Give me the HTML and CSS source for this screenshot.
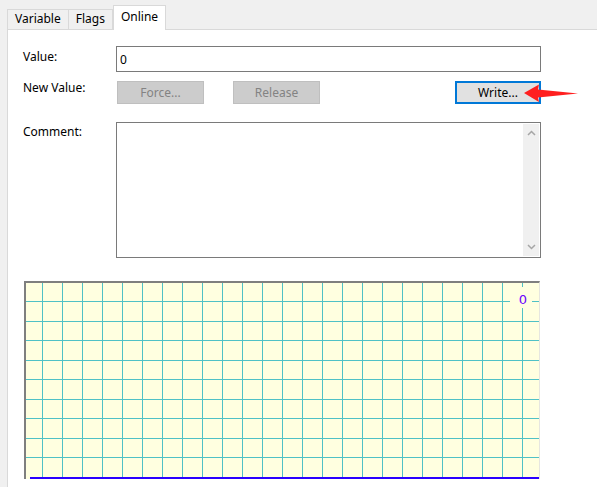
FILE: index.html
```html
<!DOCTYPE html>
<html lang="en">
<head>
  <meta charset="UTF-8">
  <meta name="viewport" content="width=device-width, initial-scale=1.0">
  <title>Variable Properties</title>
  <link rel="stylesheet" href="styles.css">
</head>
<body>
  <div class="tabs">
    <div class="tab">Variable</div>
    <div class="tab">Flags</div>
    <div class="tab active">Online</div>
  </div>

  <div class="panel">
    <div class="row value-row">
      <label class="label" for="value">Value:</label>
      <input class="value-input" id="value" type="text" value="0">
    </div>

    <div class="row buttons-row">
      <span class="label label-new">New Value:</span>
      <button class="btn" disabled>Force...</button>
      <button class="btn btn-release" disabled>Release</button>
      <button class="btn btn-write">Write...</button>
      <svg class="arrow" width="60" height="22" viewBox="0 0 60 22">
        <polygon points="0,9 15,0.5 14,5.5 54,9.5 14,13.5 15,18" fill="#ff1f1f"/>
      </svg>
    </div>

    <div class="row comment-row">
      <span class="label label-comment">Comment:</span>
      <div class="comment">
        <div class="comment-text"></div>
        <div class="scrollbar">
          <svg width="9" height="6" viewBox="0 0 9 6"><polyline points="1,5 4.5,1.5 8,5" fill="none" stroke="#a6a6a6" stroke-width="1.5"/></svg>
          <svg width="9" height="6" viewBox="0 0 9 6"><polyline points="1,1 4.5,4.5 8,1" fill="none" stroke="#a6a6a6" stroke-width="1.5"/></svg>
        </div>
      </div>
    </div>

    <div class="chart">
      <svg width="513" height="196" viewBox="0 0 513 196">
        <g stroke="#4fc1c6" stroke-width="1">
          <line x1="16.5" y1="0" x2="16.5" y2="194"/>
          <line x1="36.5" y1="0" x2="36.5" y2="194"/>
          <line x1="56.5" y1="0" x2="56.5" y2="194"/>
          <line x1="76.5" y1="0" x2="76.5" y2="194"/>
          <line x1="96.5" y1="0" x2="96.5" y2="194"/>
          <line x1="116.5" y1="0" x2="116.5" y2="194"/>
          <line x1="136.5" y1="0" x2="136.5" y2="194"/>
          <line x1="156.5" y1="0" x2="156.5" y2="194"/>
          <line x1="176.5" y1="0" x2="176.5" y2="194"/>
          <line x1="196.5" y1="0" x2="196.5" y2="194"/>
          <line x1="216.5" y1="0" x2="216.5" y2="194"/>
          <line x1="236.5" y1="0" x2="236.5" y2="194"/>
          <line x1="256.5" y1="0" x2="256.5" y2="194"/>
          <line x1="276.5" y1="0" x2="276.5" y2="194"/>
          <line x1="296.5" y1="0" x2="296.5" y2="194"/>
          <line x1="316.5" y1="0" x2="316.5" y2="194"/>
          <line x1="336.5" y1="0" x2="336.5" y2="194"/>
          <line x1="356.5" y1="0" x2="356.5" y2="194"/>
          <line x1="376.5" y1="0" x2="376.5" y2="194"/>
          <line x1="396.5" y1="0" x2="396.5" y2="194"/>
          <line x1="416.5" y1="0" x2="416.5" y2="194"/>
          <line x1="436.5" y1="0" x2="436.5" y2="194"/>
          <line x1="456.5" y1="0" x2="456.5" y2="194"/>
          <line x1="476.5" y1="0" x2="476.5" y2="194"/>
          <line x1="496.5" y1="0" x2="496.5" y2="194"/>
          <line x1="0" y1="18.5" x2="513" y2="18.5"/>
          <line x1="0" y1="38.5" x2="513" y2="38.5"/>
          <line x1="0" y1="57.5" x2="513" y2="57.5"/>
          <line x1="0" y1="77.5" x2="513" y2="77.5"/>
          <line x1="0" y1="96.5" x2="513" y2="96.5"/>
          <line x1="0" y1="116.5" x2="513" y2="116.5"/>
          <line x1="0" y1="135.5" x2="513" y2="135.5"/>
          <line x1="0" y1="155.5" x2="513" y2="155.5"/>
          <line x1="0" y1="174.5" x2="513" y2="174.5"/>
        </g>
        <!-- value label, covers the grid -->
        <rect x="484" y="4" width="22" height="21" fill="#ffffe0"/>
        <text x="497" y="21" class="chart-label" text-anchor="middle">0</text>
        <rect x="4" y="194" width="509" height="2" fill="#2a00ff"/>
      </svg>
    </div>
  </div>
</body>
</html>
```

FILE: styles.css
```css
html, body {
  height: 100%;
}

body {
  margin: 0;
  background-color: #f0f0f0;
  font-family: "Noto Sans", "Liberation Sans", sans-serif;
  font-size: 12px;
  color: #000;
  display: flex;
  flex-direction: column;
  overflow: hidden;
}

.tabs {
  display: flex;
  align-items: flex-end;
  height: 29px;
  padding-left: 7px;
}

.tab {
  height: 19px;
  line-height: 18px;
  padding: 0 7px;
  border: 1px solid #d9d9d9;
  border-bottom: none;
  margin-right: -1px;
  background-color: #f0f0f0;
}

.tab.active {
  height: 24px;
  line-height: 22px;
  margin-left: 1px;
  margin-bottom: -1px;
  background-color: #fff;
  position: relative;
  z-index: 1;
}

.panel {
  flex: 1;
  margin-left: 7px;
  border-top: 1px solid #d9d9d9;
  border-left: 1px solid #d9d9d9;
  background-color: #fff;
  padding: 16px 0 0 15px;
}

.row {
  display: flex;
  align-items: flex-start;
  width: 518px;
}

.label {
  width: 93px;
  flex-shrink: 0;
  line-height: 16px;
}

.value-row .label {
  margin-top: 3px;
}

.value-input {
  width: 425px;
  height: 26px;
  box-sizing: border-box;
  border: 1px solid #7a7a7a;
  padding: 0 3px;
  font: inherit;
  color: #000;
  outline: none;
}

.buttons-row {
  margin-top: 9px;
  position: relative;
}

.label-new {
  margin-top: -1px;
}

.btn {
  width: 87px;
  height: 23px;
  box-sizing: border-box;
  font: inherit;
  border: 1px solid #bfbfbf;
  background-color: #cccccc;
  color: #838383;
  padding: 0;
}

.label-new + .btn {
  margin-left: 1px;
}

.btn-release {
  margin-left: 29px;
}

.btn-write {
  margin-left: auto;
  width: 86px;
  border: 2px solid #0078d7;
  background-color: #e1e1e1;
  color: #000;
}

.arrow {
  position: absolute;
  left: 501px;
  top: 3px;
}

.comment-row {
  margin-top: 18px;
}

.label-comment {
  margin-top: 2px;
}

.comment {
  width: 425px;
  height: 136px;
  box-sizing: border-box;
  border: 1px solid #7a7a7a;
  display: flex;
  padding: 1px;
}

.comment-text {
  flex: 1;
}

.scrollbar {
  width: 16px;
  background-color: #f0f0f0;
  display: flex;
  flex-direction: column;
  justify-content: space-between;
  align-items: center;
  padding: 6px 0 6px;
}

.chart {
  margin: 23px 0 0 1px;
  width: 513px;
  background-color: #ffffe0;
  border-top: 2px solid #7f7f7f;
  border-left: 2px solid #7f7f7f;
  border-right: 1px solid #e6e6e0;
}

.chart svg {
  display: block;
}

.chart-label {
  font-family: "DejaVu Sans", sans-serif;
  font-size: 13px;
  fill: #6a00ff;
}
```
